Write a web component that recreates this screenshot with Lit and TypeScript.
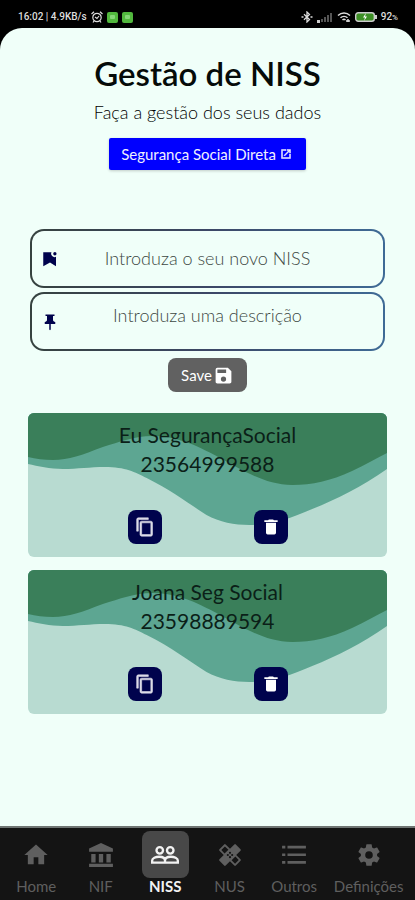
import { LitElement, html, css, svg } from "lit";
import { customElement, property, state } from "lit/decorators.js";
import { classMap } from "lit/directives/class-map.js";

const icons = {
  home: svg`<path d="M10 20v-6h4v6h5v-8h3L12 3 2 12h3v8z"/>`,
  bank: svg`<path d="M12 1 1 6v3h22V6zM3 11h4v8H3zM10 11h4v8h-4zM17 11h4v8h-4zM1 20h22v3H1z"/>`,
  people: svg`<g fill="none" stroke="currentColor" stroke-width="2"><circle cx="7.500" cy="8" r="2.800"/><circle cx="16.500" cy="8" r="2.800"/><path d="M1 18.500v-1.700c0-2 3-3.300 6-3.300s5 1 5 3.300v1.700zM12 18.500h11v-1.700c0-2-3-3.300-6-3.300s-5 1.200-5 3.300z"/></g>`,
  plaster: svg`<path d="M17.730 12.020l3.980-3.980a1 1 0 0 0 0-1.410l-4.340-4.340a1 1 0 0 0-1.410 0l-3.980 3.980L8 2.290a1 1 0 0 0-1.410 0L2.250 6.630a1 1 0 0 0 0 1.410l3.980 3.980L2.250 16a1 1 0 0 0 0 1.410l4.340 4.340a1 1 0 0 0 1.410 0l3.980-3.980 3.980 3.980a1 1 0 0 0 1.410 0l4.340-4.340a1 1 0 0 0 0-1.410zM12 9a1 1 0 1 1 0 2 1 1 0 0 1 0-2zM6.980 10.500 4 7.330l3.300-3.290 3.250 3.200zM10 13a1 1 0 1 1 0-2 1 1 0 0 1 0 2zm2 2a1 1 0 1 1 0-2 1 1 0 0 1 0 2zm2-4a1 1 0 1 1 0 2 1 1 0 0 1 0-2zm2.660 9-3.200-3.200 3.500-3.500 3.100 3.300z"/>`,
  list: svg`<path d="M1 3.500h3v2.500H1zM6 3.500h17v2.500H6zM1 10.500h3V13H1zM6 10.500h17V13H6zM1 17.500h3V20H1zM6 17.500h17V20H6z"/>`,
  gear: svg`<path d="M19.430 12.980c.04-.32.07-.64.07-.98s-.03-.66-.07-.98l2.110-1.650c.19-.15.24-.42.12-.64l-2-3.460c-.12-.22-.39-.3-.61-.22l-2.490 1c-.52-.4-1.080-.73-1.690-.98l-.38-2.650A.49.49 0 0 0 14 2h-4c-.25 0-.46.18-.49.42l-.38 2.650c-.61.25-1.170.59-1.690.98l-2.490-1c-.23-.09-.49 0-.61.22l-2 3.460c-.13.22-.07.49.12.64l2.110 1.650c-.04.32-.07.65-.07.98s.03.66.07.98l-2.110 1.650c-.19.15-.24.42-.12.64l2 3.460c.12.22.39.3.61.22l2.490-1c.52.4 1.080.73 1.690.98l.38 2.650c.03.24.24.42.49.42h4c.25 0 .46-.18.49-.42l.38-2.650c.61-.25 1.170-.59 1.690-.98l2.490 1c.23.09.49 0 .61-.22l2-3.460c.12-.22.07-.49-.12-.64zM12 15.500a3.500 3.500 0 1 1 0-7 3.500 3.500 0 0 1 0 7z"/>`,
  bookmark: svg`<path d="M3 3h11a4.500 4.500 0 0 0 6 6v12.500L12 16.500l-9 5z"/><circle cx="18.500" cy="5" r="2.200"/>`,
  pin: svg`<path d="M16 9V4h2V2H6v2h2v5c0 1.660-1.340 3-3 3v2.500h6V22l1 1 1-1v-7.500h6V12c-1.660 0-3-1.340-3-3z"/>`,
  save: svg`<path d="M17 3H5a2 2 0 0 0-2 2v14c0 1.100.9 2 2 2h14c1.100 0 2-.9 2-2V7zm-5 16a3 3 0 1 1 0-6 3 3 0 0 1 0 6zm3-10H5V5h10z"/>`,
  copy: svg`<path d="M16 1H4a2 2 0 0 0-2 2v14h2V3h12zm3 4H8a2 2 0 0 0-2 2v14c0 1.100.9 2 2 2h11c1.100 0 2-.9 2-2V7a2 2 0 0 0-2-2zm0 16H8V7h11z" stroke="currentColor" stroke-width=".7"/>`,
  trash: svg`<path d="M6 7h12v12a2 2 0 0 1-2 2H8a2 2 0 0 1-2-2zM15.500 4l-1-1h-5l-1 1H4v2h16V4z"/>`,
  open: svg`<path d="M19 19H5V5h7V3H3v18h18v-9h-2zM14 3v2h3.600l-9.800 9.800 1.400 1.400L19 6.400V10h2V3z" stroke="currentColor"/>`,
};

type IconName = keyof typeof icons;

@customElement("app-icon")
class AppIcon extends LitElement {
  @property() name: IconName = "home";
  static styles = css`
    :host { display: inline-flex; width: 24px; height: 24px; }
    .glyph { width: 100%; height: 100%; fill: currentColor; }
  `;
  render() {
    return html`<svg class="glyph" viewBox="0 0 24 24" fill-rule="evenodd" aria-hidden="true">${icons[this.name]}</svg>`;
  }
}

@customElement("status-bar")
class StatusBar extends LitElement {
  static styles = css`
    :host {
      display: flex; justify-content: space-between; align-items: center;
      height: 28px; box-sizing: border-box; padding: 6px 17px 0 18px;
      background: #000; color: #ddd; font: 500 10px/16px Roboto, sans-serif;
    }
    .group { display: flex; align-items: center; gap: 4px; }
    .app { width: 11px; height: 11px; border-radius: 2px; background: #52b83e; display: grid; place-items: center; }
    .app::after { content: ""; width: 5px; height: 4px; border-radius: 1px; background: #86d678; }
    .percent { font-size: 8px; }
  `;
  render() {
    return html`
      <div class="group">
        <span>16:02 | 4.9KB/s</span>
        <svg width="12" height="12" viewBox="0 0 12 12" fill="none" stroke="#ddd" stroke-width="1.200"><circle cx="6" cy="6.500" r="4.200"/><path d="M.5 3 3 .8M11.500 3 9 .8M4 6l2 1.500L8 5M3 10l-1 1.500M9 10l1 1.500"/></svg>
        <span class="app"></span><span class="app"></span>
      </div>
      <div class="group">
        <svg width="12" height="12" viewBox="0 0 12 12" fill="none" stroke="#ddd" stroke-width="1.300"><path d="M3 3.200 8.500 8.600 6 11V1l2.500 2.400L3 8.800"/><path d="M.5 6h2M9.500 6h2"/></svg>
        <svg width="16" height="12" viewBox="0 0 16 12" fill="#555"><path fill="#ccc" d="M0 9h3v3H0z"/><path d="M4 8h2v3H4zM7 6h2v5H7zM10 4h2v7h-2zM13 2h2v9h-2z"/></svg>
        <svg width="14" height="12" viewBox="0 0 14 12" fill="none" stroke="#ddd" stroke-width="1.500"><path d="M1 4.500c3.500-3.300 8.500-3.300 12 0M3.500 6.800c2-1.900 5-1.900 7 0M5.500 9c1-.9 2-.9 3 0M9 10h4M11 8v3"/></svg>
        <svg width="22" height="12" viewBox="0 0 22 12"><rect x=".7" y="1.700" width="18.600" height="8.600" rx="2.500" fill="#3c8f24" stroke="#ccc" stroke-width="1.400"/><path d="M20 4h2v4h-2z" fill="#ccc"/><path d="m11 2-3 4.500h2L9 10l3-4.500h-2z" fill="#fff"/></svg>
        <span>92<span class="percent">%</span></span>
      </div>`;
  }
}

@customElement("niss-card")
class NissCard extends LitElement {
  @property() label = "";
  @property() number = "";
  static styles = css`
    :host {
      display: block; position: relative; overflow: hidden;
      border-radius: 6px; background: #b8dbd1; color: #0b1f18;
    }
    .waves { position: absolute; inset: 0; width: 100%; height: 100%; }
    .body { position: relative; padding: 7px 0 13px; text-align: center; font-size: 21px; line-height: 29px; }
    .label, .number { margin: 0; font-weight: 400; font-size: inherit; }
    .actions { display: flex; justify-content: center; gap: 92px; margin-top: 32px; }
    .action {
      display: grid; place-items: center; width: 34px; height: 34px; padding: 0;
      border: 0; border-radius: 8px; background: #00034d; color: #fff; cursor: pointer;
    }
    .small { width: 20px; height: 20px; }
    .copy { color: #dcdce8; }
  `;
  render() {
    return html`
      <svg class="waves" viewBox="0 0 360 144" preserveAspectRatio="none" aria-hidden="true">
        <path fill="#5da692" d="M0 0H360V56C334 74 310 86 285 96C262 106 243 112 222 112C207 112 192 109 179 102C160 90 145 78 119 65C107 59 98 54 77 54C62 54 50 56 35 56C22 56 10 53 0 51Z"/>
        <path fill="#3a7f5a" d="M0 0H360V40C348 46 338 52 325 58C303 68 285 72 265 72C243 72 224 62 209 54C196 47 188 42 179 38C162 29 143 23 125 23C106 23 92 29 75 34C54 42 41 47 25 47C16 47 8 46 0 44Z"/>
      </svg>
      <div class="body">
        <h2 class="label">${this.label}</h2>
        <p class="number">${this.number}</p>
        <div class="actions">
          <button class="action copy" type="button" aria-label="Copiar"><app-icon class="small" name="copy"></app-icon></button>
          <button class="action" type="button" aria-label="Eliminar"><app-icon class="small" name="trash"></app-icon></button>
        </div>
      </div>`;
  }
}

@customElement("tab-bar")
class TabBar extends LitElement {
  @state() active = "NISS";
  static styles = css`
    :host { display: block; background: #141414; border-top: 2px solid #6f7573; }
    .tabs { display: grid; grid-template-columns: repeat(5, 64fr) 84fr; padding: 3px 4px 5px; }
    .tab {
      display: flex; flex-direction: column; align-items: center;
      color: #5f5f5f; text-decoration: none; font-size: 15px; line-height: 17px;
    }
    .badge { display: grid; place-items: center; width: 47px; height: 47px; border-radius: 8px; }
    .current { color: #f2f2f2; font-weight: 700; }
    .current .badge { background: #484848; }
    .icon { width: 26px; height: 26px; }
    .wide { width: 28px; height: 28px; }
  `;
  tabs: [string, IconName][] = [
    ["Home", "home"], ["NIF", "bank"], ["NISS", "people"],
    ["NUS", "plaster"], ["Outros", "list"], ["Definições", "gear"],
  ];
  render() {
    return html`<nav class="tabs">${this.tabs.map(([text, icon]) => html`
      <a href="#${icon}" class=${classMap({ tab: true, current: text === this.active })} @click=${() => (this.active = text)}>
        <span class="badge"><app-icon class=${classMap({ icon: true, wide: icon === "people" || icon === "home" })} name=${icon}></app-icon></span>
        <span>${text}</span>
      </a>`)}</nav>`;
  }
}

@customElement("app-root")
class AppRoot extends LitElement {
  static styles = css`
    :host {
      display: flex; flex-direction: column; min-height: 100vh;
      background: #000; font-family: Lato, sans-serif;
    }
    .page {
      flex: 1; display: flex; flex-direction: column; align-items: center;
      padding: 24px 28px; background: #f0fff9; border-radius: 22px 22px 0 0;
    }
    .title { margin: 0; font-size: 33px; line-height: 42px; font-weight: 600; color: #050b09; }
    .lead { margin: 7px 0 0; font-size: 18px; line-height: 22px; font-weight: 300; color: #000; }
    .direct {
      display: flex; align-items: center; gap: 4px; margin-top: 15px; padding: 0 14px 0 12px;
      height: 32px; border-radius: 2px; background: #00f; color: #f0f0ff;
      font-size: 15px; text-decoration: none; box-shadow: 0 1px 3px #0003;
    }
    .open { width: 12px; height: 12px; }
    .form { display: flex; flex-direction: column; align-items: center; gap: 4px; align-self: stretch; margin: 59px 2px 0; }
    .field {
      display: flex; align-items: center; align-self: stretch; box-sizing: border-box; height: 59px;
      padding: 0 9px; border: 2px solid transparent; border-radius: 14px; color: #00034d;
      background: linear-gradient(#f0fff9, #f0fff9) padding-box,
        linear-gradient(90deg, #36423f, #3c4766 50%, #3f6b96) border-box;
    }
    .mark { width: 18px; height: 18px; }
    .control {
      flex: 1; min-width: 0; box-sizing: border-box; height: 38px; margin: 0 18px 0 0; padding: 0 0 2px; border: 0; outline: 0;
      background: none; resize: none; text-align: center; overflow: hidden;
      font: 300 18px/24px Lato, sans-serif; color: #222;
    }
    .control::placeholder { color: #3d4844; opacity: 1; }
    .save {
      display: flex; align-items: center; gap: 1px; height: 34px; margin-top: 3px; padding: 0 13px;
      border: 0; border-radius: 8px; background: #616161; color: #fff;
      font: 15px/20px Lato, sans-serif; cursor: pointer;
    }
    .disk { width: 21px; height: 21px; }
    .cards { align-self: stretch; display: grid; gap: 13px; margin-top: 21px; }
  `;
  entries = [
    { label: "Eu SegurançaSocial", number: "23564999588" },
    { label: "Joana Seg Social", number: "23598889594" },
  ];
  render() {
    return html`
      <status-bar></status-bar>
      <main class="page">
        <h1 class="title">Gestão de NISS</h1>
        <p class="lead">Faça a gestão dos seus dados</p>
        <a class="direct" href="#direta">Segurança Social Direta <app-icon class="open" name="open"></app-icon></a>
        <form class="form" @submit=${(e: Event) => e.preventDefault()}>
          <label class="field">
            <app-icon class="mark" name="bookmark"></app-icon>
            <input class="control" aria-label="NISS" placeholder="Introduza o seu novo NISS">
          </label>
          <label class="field">
            <app-icon class="mark" name="pin"></app-icon>
            <textarea class="control" aria-label="Descrição" placeholder="Introduza uma descrição"></textarea>
          </label>
          <button class="save" type="submit">Save <app-icon class="disk" name="save"></app-icon></button>
        </form>
        <section class="cards">
          ${this.entries.map((e) => html`<niss-card .label=${e.label} .number=${e.number}></niss-card>`)}
        </section>
      </main>
      <tab-bar></tab-bar>`;
  }
}
